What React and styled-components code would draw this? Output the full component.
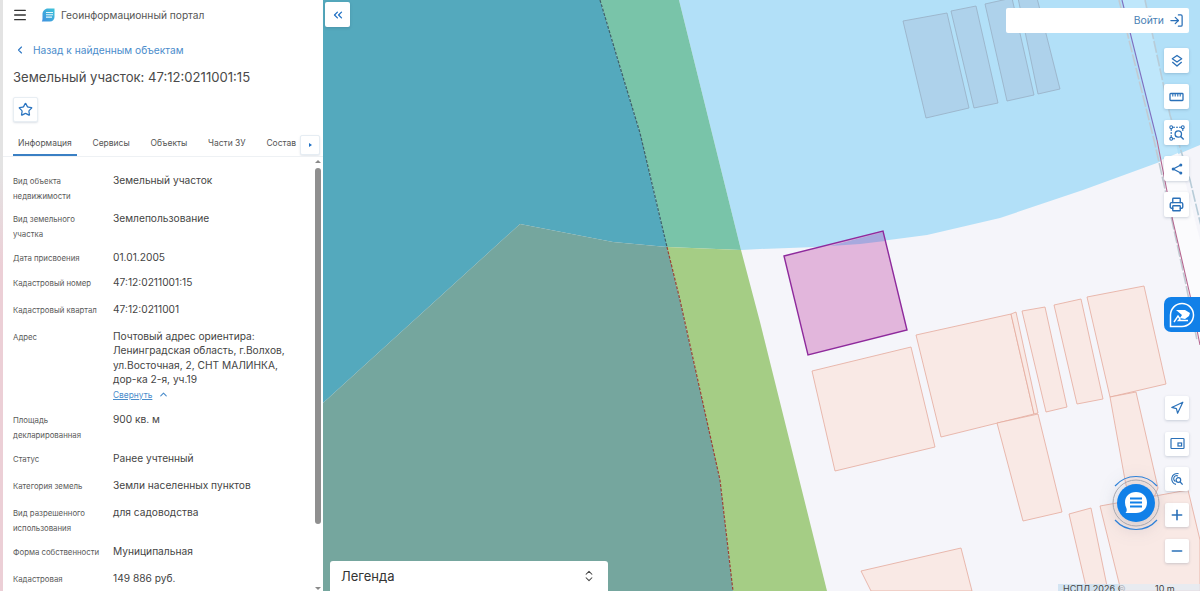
import React from "react";
import styled, { createGlobalStyle } from "styled-components";
import {
  Menu, ChevronLeft, ChevronUp, Star, Printer, Navigation,
  Plus, Minus, LogIn, ChevronsLeft, ChevronsUpDown,
} from "lucide-react";

const Global = createGlobalStyle`
  html, body { margin: 0; padding: 0; height: 100%; overflow: hidden; }
  body { font-family: Inter, "Noto Sans", sans-serif; background: #fff; }
  * { box-sizing: border-box; }
`;

const Page = styled.div`
  display: flex;
  width: 1200px;
  height: 591px;
  overflow: hidden;
`;
const EdgeStrip = styled.div`
  width: 3px;
  flex: none;
  background: linear-gradient(180deg, #e3e3e3 0%, #e3e3e3 28%, #eccfd6 45%, #eccfd6 100%);
`;
const Sidebar = styled.aside`
  width: 320px;
  flex: none;
  display: flex;
  flex-direction: column;
  background: #fff;
  color: #444;
`;
const Header = styled.header`
  height: 30px;
  flex: none;
  display: flex;
  align-items: center;
  padding-left: 9px;
  svg.burger { color: #333; }
`;
const LogoWrap = styled.div`
  display: flex;
  margin-left: 13px;
  margin-right: 6px;
`;
const PortalName = styled.span`
  font-size: 10.2px;
  color: #555;
`;
const BackLink = styled.a`
  height: 16px;
  margin-top: 12px;
  padding-left: 11px;
  display: flex;
  align-items: center;
  gap: 7px;
  font-size: 10.2px;
  color: #4a8ccb;
  svg { color: #2e78c4; }
`;
const Title = styled.h1`
  margin: 9px 0 0 10px;
  height: 20px;
  line-height: 20px;
  font-size: 13.1px;
  font-weight: 400;
  color: #4a4a4a;
`;
const StarButton = styled.button`
  margin: 10px 0 0 10px;
  width: 25px;
  height: 25px;
  padding: 0;
  flex: none;
  display: flex;
  align-items: center;
  justify-content: center;
  background: #fff;
  border: 1px solid #e8eef3;
  border-radius: 2px;
  box-shadow: 0 1px 2px rgba(60, 90, 120, 0.18);
  color: #2a74c0;
`;
const TabBar = styled.nav`
  position: relative;
  margin-top: 9px;
  height: 26px;
  flex: none;
  display: flex;
  border-bottom: 1px solid #eef1f4;
  padding-left: 10px;
  overflow: hidden;
`;
const Tab = styled.span`
  height: 25px;
  flex: none;
  padding: 0 5px;
  margin-right: 10.7px;
  display: flex;
  align-items: center;
  font-size: 8.5px;
  color: #555;
  border-bottom: 2px solid ${(p) => (p.$active ? "#3a80c4" : "transparent")};
`;
const TabArrow = styled.button`
  position: absolute;
  right: 3px;
  top: 4px;
  width: 20px;
  height: 20px;
  padding: 0;
  display: flex;
  align-items: center;
  justify-content: center;
  background: #fff;
  border: 1px solid #e6edf3;
  border-radius: 2px;
  box-shadow: 0 1px 2px rgba(60, 90, 120, 0.15);
  &::after {
    content: "";
    border-left: 3px solid #1f70c4;
    border-top: 2.5px solid transparent;
    border-bottom: 2.5px solid transparent;
  }
`;
const Body = styled.div`
  flex: 1;
  min-height: 0;
  display: flex;
`;
const Details = styled.dl`
  flex: 1;
  margin: 0;
  padding: 16px 0 0 10px;
  overflow: hidden;
`;
const Row = styled.div`
  display: grid;
  grid-template-columns: 100px 1fr;
  height: ${(p) => p.$h}px;
`;
const Label = styled.dt`
  max-width: 90px;
  font-size: 7.8px;
  line-height: 14.5px;
  padding-top: 1px;
  color: #5a5a5a;
`;
const Value = styled.dd`
  margin: 0;
  max-width: 180px;
  font-size: 10.2px;
  line-height: 14.4px;
  color: #444;
`;
const Collapse = styled.div`
  display: flex;
  align-items: center;
  gap: 6px;
  margin-top: 1px;
  font-size: 8.4px;
  line-height: 14px;
  color: #4a8ccb;
  span { text-decoration: underline; }
`;
const Scrollbar = styled.div`
  width: 9px;
  flex: none;
  margin-right: 1px;
  display: flex;
  flex-direction: column;
  align-items: center;
  padding: 3px 0 1px;
`;
const ScrollArrow = styled.i`
  flex: none;
  border-left: 3px solid transparent;
  border-right: 3px solid transparent;
  ${(p) => (p.$down ? "border-top: 3px solid #8a8a8a;" : "border-bottom: 3px solid #8a8a8a;")}
`;
const ScrollTrack = styled.div`
  flex: 1;
  width: 100%;
  padding: 5px 1.5px 0;
`;
const ScrollThumb = styled.div`
  width: 6px;
  height: 356px;
  background: #8f8f8f;
  border-radius: 3px;
`;

const MapArea = styled.main`
  position: relative;
  flex: 1;
  min-width: 0;
  height: 100%;
`;
const MapSvg = styled.svg`
  display: block;
  width: 100%;
  height: 100%;
`;
const ToolButton = styled.button`
  width: ${(p) => p.$size || 25}px;
  height: ${(p) => p.$size || 25}px;
  padding: 0;
  border: none;
  display: flex;
  align-items: center;
  justify-content: center;
  background: #fff;
  border-radius: 2px;
  box-shadow: 0 1px 3px rgba(40, 70, 100, 0.22);
  color: #2a70b8;
`;
const CollapseButton = styled(ToolButton)`
  position: absolute;
  left: 2px;
  top: 2px;
  color: #1f70c4;
`;
const LoginBar = styled.div`
  position: absolute;
  top: 8px;
  right: 11px;
  width: 183px;
  height: 25px;
  display: flex;
  align-items: center;
  justify-content: flex-end;
  gap: 5px;
  padding-right: 5px;
  background: #fff;
  border-radius: 2px;
  font-size: 10.4px;
  color: #4a7fb5;
  svg { color: #2a70b8; }
`;
const ToolStack = styled.div`
  position: absolute;
  right: 11px;
  top: ${(p) => p.$top}px;
  display: flex;
  flex-direction: column;
  gap: ${(p) => p.$gap}px;
`;
const LegendBox = styled.div`
  position: absolute;
  left: 7px;
  bottom: 0;
  width: 278px;
  height: 30px;
  display: flex;
  align-items: center;
  justify-content: space-between;
  padding: 0 12px 0 11px;
  background: #fff;
  border-radius: 3px 3px 0 0;
  font-size: 13px;
  color: #333;
  svg { color: #444; }
`;
const FeedbackTab = styled.div`
  position: absolute;
  right: 0;
  top: 297px;
  width: 36px;
  height: 35px;
  display: flex;
  align-items: center;
  padding-left: 5px;
  background: #1180e8;
  border-radius: 7px 0 0 7px;
`;
const ChatFab = styled.div`
  position: absolute;
  left: 778px;
  top: 468px;
  width: 70px;
  height: 70px;
  filter: drop-shadow(0 2px 8px rgba(40, 60, 90, 0.2));
`;
const Attribution = styled.div`
  position: absolute;
  left: 735px;
  right: 0;
  bottom: 0;
  height: 7px;
  overflow: hidden;
  display: flex;
  font-size: 9px;
  line-height: 10px;
  color: #444;
`;
const AttrText = styled.span`
  width: 62px;
  padding-left: 5px;
  background: rgba(205, 225, 240, 0.85);
  white-space: nowrap;
`;
const ScaleBar = styled.span`
  flex: 1;
  padding-left: 35px;
  background: rgba(225, 235, 245, 0.7);
`;

const rows = [
  { h: 38, label: "Вид объекта недвижимости", value: "Земельный участок" },
  { h: 39, label: "Вид земельного участка", value: "Землепользование" },
  { h: 25, label: "Дата присвоения", value: "01.01.2005" },
  { h: 27, label: "Кадастровый номер", value: "47:12:0211001:15" },
  { h: 27, label: "Кадастровый квартал", value: "47:12:0211001" },
  { h: 83, label: "Адрес", value: "Почтовый адрес ориентира: Ленинградская область, г.Волхов, ул.Восточная, 2, СНТ МАЛИНКА, дор-ка 2-я, уч.19", more: true },
  { h: 39, label: "Площадь декларированная", value: "900 кв. м" },
  { h: 27, label: "Статус", value: "Ранее учтенный" },
  { h: 27, label: "Категория земель", value: "Земли населенных пунктов" },
  { h: 39, label: "Вид разрешенного использования", value: "для садоводства" },
  { h: 27, label: "Форма собственности", value: "Муниципальная" },
  { h: 27, label: "Кадастровая", value: "149 886 руб." },
];
const tabs = ["Информация", "Сервисы", "Объекты", "Части ЗУ", "Состав"];

const buildings = [
  "812,371 911,347 935,447 835,471",
  "916,335 1011,314 1034,414 941,437",
  "1011,314 1016,312 1038,413 1034,414",
  "1022,311 1045,307 1067,407 1046,412",
  "1054,305 1081,299 1103,399 1077,404",
  "1087,297 1144,286 1166,384 1110,397",
  "997,423 1038,414 1062,512 1023,521",
  "1110,397 1136,392 1158,488 1137,537 1125,480",
  "1100,506 1188,490 1200,540 1200,591 1121,591",
  "1069,514 1091,508 1108,591 1087,591",
  "861,571 961,548 972,591 871,591",
];
const waterBuildings = [
  "903,21 947,13 969,108 926,118",
  "951,11 976,6 998,103 974,108",
  "985,4 1012,-2 1034,95 1007,101",
  "1018,-2 1037,-2 1060,89 1038,94",
];

const Logo = () => (
  <svg width="14" height="15" viewBox="0 0 14 15">
    <defs>
      <linearGradient id="lg" x1="0" y1="1" x2="1" y2="0">
        <stop offset="0" stopColor="#3f8fe0" />
        <stop offset="1" stopColor="#3fc4d8" />
      </linearGradient>
    </defs>
    <path d="M7 .5h6.500v8.500c0 2.500-2 4.500-4.500 4.500H.8c.6-1 .7-2 .7-3.500V6C1.500 3 4 .5 7 .5z" fill="url(#lg)" />
    <path d="M5 4.500h7M5 6.800h7M5 9.100h6" stroke="#e6f6fb" strokeWidth="1.100" />
  </svg>
);

const LayersIcon = () => (
  <svg width="14" height="14" viewBox="0 0 14 14" fill="none" stroke="currentColor" strokeWidth="1.300" strokeLinejoin="round">
    <path d="M7 1.500l4.700 3.300L7 8 2.300 4.800z" />
    <path d="M2.300 8l4.700 4 4.700-4" />
  </svg>
);
const RulerIcon = () => (
  <svg width="15" height="10" viewBox="0 0 15 10" fill="none" stroke="currentColor" strokeWidth="1.300">
    <rect x="1" y="1.500" width="13" height="7" rx="0.800" />
    <path d="M3.800 1.500v3M6.200 1.500v3M8.800 1.500v3M11.200 1.500v3" strokeWidth="1.100" />
  </svg>
);
const ScanIcon = () => (
  <svg width="16" height="16" viewBox="0 0 16 16" fill="none" stroke="currentColor" strokeWidth="1.100">
    <circle cx="2.200" cy="2.200" r="1.400" />
    <circle cx="13.800" cy="2.200" r="1.400" />
    <circle cx="2.200" cy="13.800" r="1.400" />
    <path d="M4 2.200h8M2.200 4v8M4 13.800h2.500M13.800 4v2" strokeDasharray="2 1" />
    <circle cx="9.300" cy="9" r="3.200" strokeWidth="1.300" />
    <path d="M11.700 11.400l3 3" strokeWidth="1.400" />
  </svg>
);
const ShareIcon = () => (
  <svg width="14" height="14" viewBox="0 0 14 14" fill="currentColor" stroke="currentColor" strokeWidth="1.300">
    <path d="M10.800 3L3.200 7l7.600 4" fill="none" />
    <circle cx="10.800" cy="3" r="1.500" stroke="none" />
    <circle cx="3.200" cy="7" r="1.500" stroke="none" />
    <circle cx="10.800" cy="11" r="1.500" stroke="none" />
  </svg>
);
const MiniMapIcon = () => (
  <svg width="15" height="13" viewBox="0 0 15 13" fill="none" stroke="currentColor" strokeWidth="1.200">
    <rect x="1" y="1.500" width="13" height="10" rx="0.800" />
    <rect x="8" y="6" width="3.600" height="3" />
  </svg>
);
const TargetIcon = () => (
  <svg width="14" height="14" viewBox="0 0 14 14" fill="none" stroke="currentColor" strokeWidth="1.100">
    <path d="M8.500 1.600A5.500 5.500 0 1 0 6 12.400" />
    <path d="M8 3.900A3 3 0 1 0 5.500 9.500" />
    <circle cx="8.400" cy="8" r="2.300" strokeWidth="1.200" />
    <path d="M10 9.800l2.600 2.800" strokeWidth="1.300" />
  </svg>
);
const FeedbackIcon = () => (
  <svg width="26" height="26" viewBox="0 0 26 26" fill="none">
    <path d="M13 1.500a11.500 11.500 0 1 1 0 23H1.500V13A11.500 11.500 0 0 1 13 1.500z" stroke="#fff" strokeWidth="1.500" fill="#1180e8" />
    <path d="M7 8h9l5 3-1 3-4 3-5-1 2-3z" fill="#fff" />
    <path d="M5 20l4-6 2 3-1.500 1.500H19" stroke="#fff" strokeWidth="1.400" />
  </svg>
);
const ChatIcon = () => (
  <svg width="70" height="70" viewBox="0 0 70 70" fill="none">
    <circle cx="35" cy="35" r="23" stroke="#a8a8b0" strokeWidth="1" />
    <path d="M14 18A28 28 0 0 1 56 18" stroke="#2e80d8" strokeWidth="1.200" />
    <path d="M14 52A28 28 0 0 0 56 52" stroke="#2e80d8" strokeWidth="1.200" />
    <circle cx="35" cy="35" r="19" fill="#1180e8" />
    <path d="M35 24c6.600 0 11 4.500 11 10.500S41.600 45 35 45H24.500c1.200-1.300 1.500-2.700 1-4.500C24.500 38.500 24 36.500 24 34.500 24 28.500 28.400 24 35 24z" fill="#fff" />
    <path d="M29 30.500h12M29 34.500h12M29 38.500h12" stroke="#1180e8" strokeWidth="1.800" />
  </svg>
);

const MapDrawing = () => (
  <MapSvg viewBox="323 0 877 591" preserveAspectRatio="none">
    <rect x="323" y="0" width="877" height="591" fill="#f5f5fa" />
    <polygon points="679,0 1200,0 1200,145 1157,163 1083,190 1000,218 927,235 843,246 760,249 741,250" fill="#b2e0f8" />
    <polygon points="1122,0 1145,0 1178,153 1161,160" fill="#bfe7fb" />
    <polygon points="1161,160 1178,153 1200,240 1200,345 1185,280" fill="#fbfbfd" />
    <polyline points="1119,0 1154,140 1163,180 1185,280 1197,340" stroke="#c2cad2" strokeWidth="1.600" strokeDasharray="12 2" fill="none" />
    <polyline points="1145,0 1170,115 1190,180 1202,230" stroke="#b8ccd8" strokeWidth="1.600" strokeDasharray="12 2" fill="none" />
    <polyline points="1122,0 1157,140" stroke="#7f6fc0" strokeWidth="1.100" fill="none" />
    <polyline points="1157,140 1172,217 1190,295 1200,345" stroke="#b5658f" strokeWidth="1.100" fill="none" />
    <polygon points="600,0 679,0 741,250 667,247 640,133 620,67" fill="#79c4a9" />
    <polygon points="667,247 741,250 760,322 827,591 733,591 720,480 680,300" fill="#a5cd85" />
    <polygon points="323,0 600,0 620,67 640,133 667,247 613,242 520,224 323,403" fill="#54a9bd" />
    <polygon points="323,403 520,224 613,242 667,247 680,300 720,480 733,591 323,591" fill="#75a69e" />
    <polyline points="600,0 620,67 640,133 667,247" stroke="#3f6068" strokeWidth="1.200" strokeDasharray="3 1.500" fill="none" />
    <polyline points="667,247 680,300 700,390 720,480 733,591" stroke="#9a4436" strokeWidth="1.200" strokeDasharray="3 1.500" fill="none" />
    {waterBuildings.map((p) => (
      <polygon key={p} points={p} fill="#aed2eb" stroke="#98aec4" strokeWidth="0.800" />
    ))}
    {buildings.map((p) => (
      <polygon key={p} points={p} fill="#f9e9e5" stroke="#e4a99c" strokeWidth="0.800" />
    ))}
    <polygon points="784,256 883,231 907,330 808,355" fill="#e2b6dc" />
    <polygon points="830,246 883,232 885,241 860,244" fill="#a7a9de" />
    <polygon points="784,256 883,231 907,330 808,355" fill="none" stroke="#8e2a9c" strokeWidth="1.400" />
  </MapSvg>
);

export default function App() {
  return (
    <Page>
      <Global />
      <EdgeStrip />
      <Sidebar>
        <Header>
          <Menu className="burger" size={16} strokeWidth={2} />
          <LogoWrap><Logo /></LogoWrap>
          <PortalName>Геоинформационный портал</PortalName>
        </Header>
        <BackLink>
          <ChevronLeft size={12} strokeWidth={2.200} />
          Назад к найденным объектам
        </BackLink>
        <Title>Земельный участок: 47:12:0211001:15</Title>
        <StarButton><Star size={15} strokeWidth={2} /></StarButton>
        <TabBar>
          {tabs.map((t, i) => (
            <Tab key={t} $active={i === 0}>{t}</Tab>
          ))}
          <TabArrow />
        </TabBar>
        <Body>
          <Details>
            {rows.map((r) => (
              <Row key={r.label} $h={r.h}>
                <Label>{r.label}</Label>
                <Value>
                  {r.value}
                  {r.more && (
                    <Collapse>
                      <span>Свернуть</span>
                      <ChevronUp size={11} strokeWidth={2.400} />
                    </Collapse>
                  )}
                </Value>
              </Row>
            ))}
          </Details>
          <Scrollbar>
            <ScrollArrow />
            <ScrollTrack><ScrollThumb /></ScrollTrack>
            <ScrollArrow $down />
          </Scrollbar>
        </Body>
      </Sidebar>
      <MapArea>
        <MapDrawing />
        <CollapseButton><ChevronsLeft size={14} strokeWidth={2.200} /></CollapseButton>
        <LoginBar>
          Войти
          <LogIn size={15} strokeWidth={2} />
        </LoginBar>
        <ToolStack $top={48} $gap={11}>
          <ToolButton><LayersIcon /></ToolButton>
          <ToolButton><RulerIcon /></ToolButton>
          <ToolButton><ScanIcon /></ToolButton>
          <ToolButton><ShareIcon /></ToolButton>
          <ToolButton><Printer size={15} strokeWidth={2.200} /></ToolButton>
        </ToolStack>
        <FeedbackTab><FeedbackIcon /></FeedbackTab>
        <ToolStack $top={396} $gap={11.700}>
          <ToolButton $size={24}><Navigation size={14} strokeWidth={2} /></ToolButton>
          <ToolButton $size={24}><MiniMapIcon /></ToolButton>
          <ToolButton $size={24}><TargetIcon /></ToolButton>
          <ToolButton $size={24}><Plus size={16} strokeWidth={2.400} /></ToolButton>
          <ToolButton $size={24}><Minus size={16} strokeWidth={2.400} /></ToolButton>
        </ToolStack>
        <ChatFab><ChatIcon /></ChatFab>
        <LegendBox>
          Легенда
          <ChevronsUpDown size={14} strokeWidth={1.800} />
        </LegendBox>
        <Attribution>
          <AttrText>НСПД 2026 ©</AttrText>
          <ScaleBar>10 m</ScaleBar>
        </Attribution>
      </MapArea>
    </Page>
  );
}
